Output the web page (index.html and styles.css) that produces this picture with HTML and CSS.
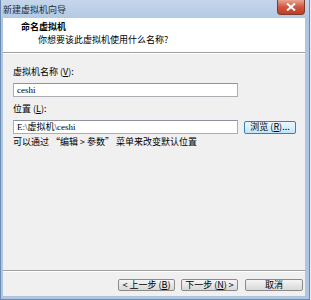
FILE: index.html
```html
<!DOCTYPE html>
<html lang="zh-CN">
<head>
    <meta charset="UTF-8">
    <title>新建虚拟机向导</title>
    <link rel="stylesheet" href="styles.css">
</head>
<body>
    <div class="window">
        <div class="titlebar">
            <span class="title">新建虚拟机向导</span>
            <div class="close-btn">
                <svg width="10" height="8" viewBox="0 0 10 8">
                    <path d="M1 0.5 L9 7.5 M9 0.5 L1 7.5" stroke="#fff" stroke-width="2"/>
                </svg>
            </div>
        </div>

        <div class="header">
            <div class="header-title">命名虚拟机</div>
            <div class="header-sub">你想要该此虚拟机使用什么名称?</div>
        </div>

        <div class="content">
            <div class="label">虚拟机名称 (<u>V</u>):</div>
            <div class="input input-wide">ceshi</div>

            <div class="label label-gap">位置 (<u>L</u>):</div>
            <div class="row">
                <div class="input input-wide">E:\虚拟机\ceshi</div>
                <button class="btn btn-browse">浏览 (<u>R</u>)...</button>
            </div>
            <div class="hint">可以通过 “编辑 &gt; 参数” 菜单来改变默认位置</div>
        </div>

        <div class="footer">
            <button class="btn btn-nav">&lt; 上一步 (<u>B</u>)</button>
            <button class="btn btn-nav">下一步 (<u>N</u>) &gt;</button>
            <button class="btn btn-cancel">取消</button>
        </div>
    </div>
</body>
</html>
```

FILE: styles.css
```css
* {
    margin: 0;
    padding: 0;
    box-sizing: border-box;
}

body {
    width: 311px;
    height: 300px;
    background: #e8edf3;
    font-family: "Noto Sans CJK SC", "DejaVu Sans", sans-serif;
    font-size: 9px;
    color: #000;
    overflow: hidden;
}

.window {
    width: 310px;
    height: 300px;
    background: #afc6e0;
    border-left: 1px solid #6d8bb0;
    border-right: 1px solid #6d8bb0;
    border-bottom: 1px solid #6d8bb0;
    padding: 0 4px 3px 2px;
    display: flex;
    flex-direction: column;
}

.titlebar {
    height: 18px;
    display: flex;
    align-items: center;
    justify-content: space-between;
    background: linear-gradient(#c5d6ea, #b3c9e3);
    margin: 0 -4px 0 -2px;
    padding: 0 4px 0 2px;
}

.title {
    color: #1b2a3d;
    line-height: 12px;
    padding-top: 1px;
}

.close-btn {
    width: 28px;
    height: 15px;
    margin-top: -3px;
    border: 1px solid #7a3a30;
    border-top: none;
    border-radius: 0 0 4px 4px;
    background: linear-gradient(#e8a493, #d0563e 50%, #c13d25);
    display: flex;
    align-items: center;
    justify-content: center;
}

.header {
    height: 35px;
    background: #fff;
    border-bottom: 1px solid #a0a0a0;
    box-shadow: 0 1px 0 #fff;
    padding: 3px 0 0 18px;
    line-height: 12px;
}

.header-title {
    font-weight: bold;
}

.header-sub {
    padding-left: 17px;
    margin-top: 1px;
}

.content {
    flex: 1;
    background: #f0f0f0;
    padding: 12px 0 0 10px;
    margin-top: 1px;
    line-height: 12px;
}

.label {
    margin-bottom: 5px;
}

.label-gap {
    margin-top: 6px;
}

.input {
    height: 14px;
    background: #fff;
    border: 1px solid #abadb3;
    border-top-color: #8e939b;
    padding-left: 3px;
    font-family: "Liberation Serif", "Noto Sans CJK SC", serif;
    font-size: 9px;
    line-height: 12px;
}

.input-wide {
    width: 225px;
}

.row {
    display: flex;
    align-items: center;
    gap: 6px;
}

.btn {
    font-family: "Noto Sans CJK SC", sans-serif;
    font-size: 9px;
    line-height: 10px;
    color: #000;
    border: 1px solid #8a8a8a;
    border-radius: 2px;
    background: linear-gradient(#f6f6f6, #e6e6e6 50%, #d8d8d8);
}

.btn-browse {
    width: 52px;
    height: 13px;
    border-color: #3c7fb1;
    background: linear-gradient(#eaf6fd, #d9f0fc 50%, #bee6fd);
}

.hint {
    margin-top: 2px;
}

.footer {
    height: 26px;
    background: #f0f0f0;
    border-top: 1px solid #a0a0a0;
    box-shadow: inset 0 1px 0 #fff;
    display: flex;
    justify-content: flex-end;
    padding: 8px 2px 0 0;
    gap: 6px;
}

.btn-nav {
    width: 57px;
    height: 12px;
}

.btn-cancel {
    width: 58px;
    height: 12px;
    margin-left: 1px;
}
```
